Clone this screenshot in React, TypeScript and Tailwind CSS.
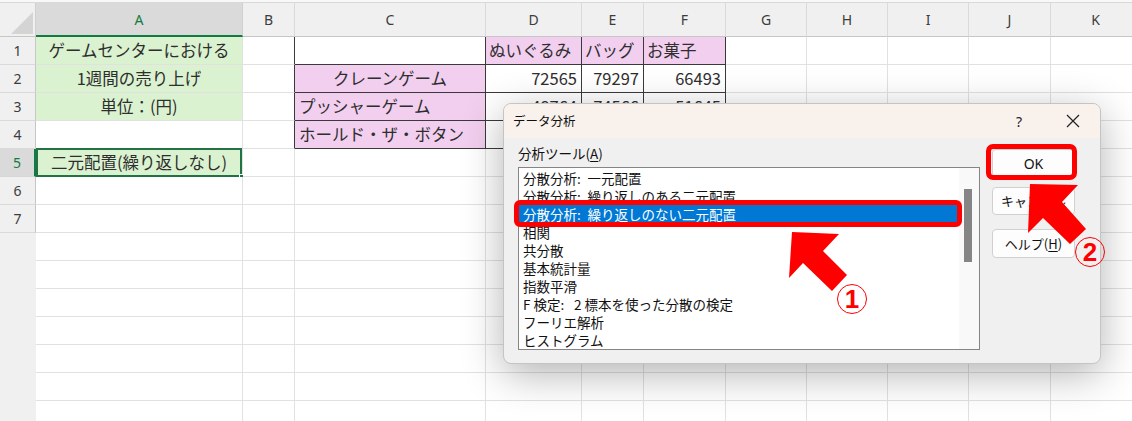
import React, { Fragment } from "react";

const COLS = ["A", "B", "C", "D", "E", "F", "G", "H", "I", "J", "K"];
const GREEN = "bg-[#daf2d0]";
const PINK = "bg-[#f2cfee]";
const CENTER = "justify-center";
const LEFT = "justify-start pl-[4px]";
const RIGHT = "justify-end pr-[4px]";

type Cell = { t?: string; bg?: string; al?: string };

const cells: Record<string, Cell> = {
  A1: { t: "ゲームセンターにおける", bg: GREEN, al: CENTER },
  A2: { t: "1週間の売り上げ", bg: GREEN, al: CENTER },
  A3: { t: "単位：(円)", bg: GREEN, al: CENTER },
  A5: { t: "二元配置(繰り返しなし)", bg: GREEN, al: CENTER },
  D1: { t: "ぬいぐるみ", bg: PINK, al: "justify-start pl-[3px]" },
  E1: { t: "バッグ", bg: PINK, al: "justify-start pl-[3px]" },
  F1: { t: "お菓子", bg: PINK, al: "justify-start pl-[3px]" },
  C2: { t: "クレーンゲーム", bg: PINK, al: CENTER },
  C3: { t: "プッシャーゲーム", bg: PINK, al: LEFT },
  C4: { t: "ホールド・ザ・ボタン", bg: PINK, al: LEFT },
  D2: { t: "72565", al: RIGHT },
  E2: { t: "79297", al: RIGHT },
  F2: { t: "66493", al: RIGHT },
  D3: { t: "48764", al: RIGHT },
  E3: { t: "74566", al: RIGHT },
  F3: { t: "51645", al: RIGHT },
};

const ITEMS = [
  "分散分析:\u2002一元配置",
  "分散分析:\u2002繰り返しのある二元配置",
  "分散分析:\u2002繰り返しのない二元配置",
  "相関",
  "共分散",
  "基本統計量",
  "指数平滑",
  "F 検定:\u2002 2 標本を使った分散の検定",
  "フーリエ解析",
  "ヒストグラム",
];

function DataCell({ col, row }: { col: string; row: number }) {
  const key = `${col}${row}`;
  const c = cells[key] || {};
  const inTable = row <= 4 && ["C", "D", "E", "F"].includes(col);
  const rb = row <= 4 && ["B", "C", "D", "E", "F"].includes(col);
  const rClass = rb ? "border-r-[#3a3a3a]" : "border-r-[#e1e1e1]";
  const bClass = inTable ? "border-b-[#3a3a3a]" : "border-b-[#e1e1e1]";
  const bg = c.bg || "bg-white";
  const al = c.al || CENTER;
  const isSel = key === "A5";
  return (
    <div
      className={`relative flex items-center whitespace-nowrap border-r border-b ${rClass} ${bClass} ${bg} ${al} text-[16.5px] leading-[27px] text-[#2e2e2e]`}
    >
      {c.t}
      {isSel && (
        <>
          <div className="absolute left-0 top-[-1px] right-0 bottom-[-1px] border-2 border-[#217346]" />
          <div className="absolute right-[-3px] bottom-[-4px] w-[6px] h-[6px] bg-[#217346] border border-white" />
        </>
      )}
    </div>
  );
}

export default function App() {
  const rows = Array.from({ length: 14 }, (_, i) => i + 1);
  return (
    <div className="relative w-[1132px] h-[421px] overflow-hidden bg-white font-['Noto_Sans_CJK_JP',sans-serif]">
      <div className="h-[3px] bg-[#f8f8f8] border-b border-[#d9d9d9]" />
      <div className="grid grid-cols-[36px_207px_52px_191px_96px_62px_82px_81px_81px_81px_82px_90px] grid-rows-[34px_repeat(14,28px)]">
        <div className="relative bg-[#f0f0f0] border-r border-b border-r-[#d0d0d0] border-b-[#c6c6c6]">
          <svg className="absolute left-[11px] top-[9px]" width="22" height="22" viewBox="0 0 22 22">
            <polygon points="22,0 22,22 0,22" fill="#d4d4d4" />
          </svg>
        </div>
        {COLS.map((c) =>
          c === "A" ? (
            <div
              key={c}
              className="flex items-center justify-center bg-[#dadada] border-r border-r-[#d0d0d0] border-b-2 border-b-[#107c41] text-[#107c41] text-[14px] font-['Noto_Sans',sans-serif]"
            >
              {c}
            </div>
          ) : (
            <div
              key={c}
              className="flex items-center justify-center bg-[#f0f0f0] border-r border-b border-r-[#dadada] border-b-[#c6c6c6] text-[#3c3c3c] text-[14px] font-['Noto_Sans',sans-serif]"
            >
              {c}
            </div>
          )
        )}
        {rows.map((r) => (
          <Fragment key={r}>
            {r === 5 ? (
              <div className="flex items-center justify-center bg-[#dadada] border-r-2 border-r-[#107c41] border-b border-b-[#d6d6d6] text-[#107c41] text-[14px] font-['Noto_Sans',sans-serif]">
                {r}
              </div>
            ) : r <= 7 ? (
              <div className="flex items-center justify-center bg-[#f0f0f0] border-r border-b border-r-[#c6c6c6] border-b-[#dadada] text-[#3c3c3c] text-[14px] font-['Noto_Sans',sans-serif]">
                {r}
              </div>
            ) : (
              <div className="bg-[#f0f0f0]" />
            )}
            {COLS.map((c) => (
              <DataCell key={c} col={c} row={r} />
            ))}
          </Fragment>
        ))}
      </div>

      {/* Dialog */}
      <div className="absolute left-[503px] top-[103px] w-[598px] h-[261px] rounded-[8px] border border-[#c4c4c4] bg-[#f0f0f0] overflow-hidden shadow-[0_10px_40px_rgba(0,0,0,0.3)] text-[#111]">
        <div className="h-[34px] bg-[#f8f1ec] flex items-center justify-between pl-[9px] pr-[20px]">
          <span className="text-[12.5px] leading-[18px]">データ分析</span>
          <div className="flex items-center gap-[44px]">
            <span className="text-[14px] font-['Noto_Sans',sans-serif] text-[#222]">?</span>
            <svg width="14" height="14" viewBox="0 0 14 14">
              <path d="M1 1 L13 13 M13 1 L1 13" stroke="#222" strokeWidth="1.2" />
            </svg>
          </div>
        </div>
        <div className="flex pl-[14px]">
          <div className="w-[462px]">
            <div className="pt-[6px] h-[24px] mb-[5px] text-[13.5px] leading-[18px]">
              分析ツール(<span className="underline underline-offset-2">A</span>)
            </div>
            <div className="h-[183px] border border-[#858585] bg-white flex">
              <div className="flex-1 pt-[1px]">
                {ITEMS.map((it, i) =>
                  i === 2 ? (
                    <div key={i} className="h-[18px] leading-[18px] pl-[4px] text-[13.5px] whitespace-pre bg-[#0078d4] text-white">
                      {it}
                    </div>
                  ) : (
                    <div key={i} className="h-[18px] leading-[18px] pl-[4px] text-[13.5px] whitespace-pre">
                      {it}
                    </div>
                  )
                )}
              </div>
              <div className="w-[20px] bg-[#f9f9f9] pt-[21px] pl-[5px]">
                <div className="w-[8px] h-[73px] bg-[#858585]" />
              </div>
            </div>
          </div>
          <div className="ml-[12px] pt-[11px] flex flex-col">
            <div className="w-[83px] h-[28px] flex items-center justify-center bg-[#fdfdfd] border border-[#d0d0d0] rounded-[4px] text-[14px] font-['Noto_Sans',sans-serif]">
              OK
            </div>
            <div className="mt-[10px] w-[83px] h-[28px] flex items-center justify-center bg-[#fdfdfd] border border-[#d0d0d0] rounded-[4px] text-[13px]">
              キャンセル
            </div>
            <div className="mt-[14px] w-[83px] h-[29px] flex items-center justify-center bg-[#fdfdfd] border border-[#d0d0d0] rounded-[4px] text-[13px]">
              ヘルプ(<span className="underline underline-offset-2">H</span>)
            </div>
          </div>
        </div>
      </div>

      {/* Annotations */}
      <div className="absolute left-[514px] top-[200px] w-[448px] h-[27px] border-[5px] border-[#ff0000] rounded-[6px]" />
      <div className="absolute left-[986px] top-[144px] w-[91px] h-[36px] border-[5px] border-[#ff0000] rounded-[7px]" />
      <svg className="absolute left-0 top-0 pointer-events-none" width="1132" height="421" viewBox="0 0 1132 421">
        <polygon points="792,232 839,234 823,251 847,275 832,291 803,263 789,278" fill="#ff0000" />
        <polygon points="1030,184 1078,185 1062,202 1086,229 1070,244 1043,218 1028,233" fill="#ff0000" />
      </svg>
      <div className="absolute left-[837px] top-[284px] w-[30px] h-[30px] rounded-full border-[1.5px] border-[#ff0000] flex items-center justify-center text-[#ff0000] text-[26px] font-bold leading-none font-['Liberation_Sans',sans-serif]">
        1
      </div>
      <div className="absolute left-[1075px] top-[237px] w-[30px] h-[30px] rounded-full border-[1.5px] border-[#ff0000] flex items-center justify-center text-[#ff0000] text-[26px] font-bold leading-none font-['Liberation_Sans',sans-serif]">
        2
      </div>
    </div>
  );
}
